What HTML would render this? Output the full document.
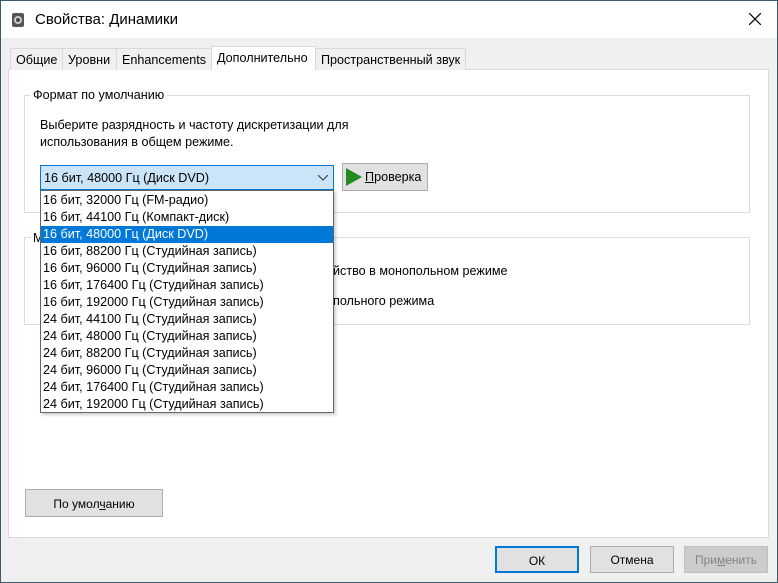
<!DOCTYPE html><html><head><meta charset="utf-8"><style>
*{margin:0;padding:0;box-sizing:border-box}
body{width:778px;height:583px;background:#f0f0f0;font-family:"Liberation Sans",sans-serif;font-size:12.6px;color:#000;position:relative;overflow:hidden}
.a{position:absolute}
.win{left:0;top:0;width:778px;height:583px;border:1px solid #3a5a6e}
.title{left:1px;top:1px;width:776px;height:37px;background:#fff}
.tab{top:48px;height:22px;border:1px solid #d9d9d9;border-bottom:none;background:#f0f0f0;padding:4px 0 0 5px;white-space:nowrap}
.panel{left:8px;top:69px;width:761px;height:469px;background:#fff;border:1px solid #d9d9d9}
.grp{border:1px solid #dcdcdc}
.btn{background:#e1e1e1;border:1px solid #adadad;text-align:center;font-size:12px}
.item{height:17px;line-height:17px;padding-left:2px;white-space:nowrap}
</style></head><body>
<div class="a win"></div>
<div class="a title"></div>
<svg class="a" style="left:11px;top:12px" width="14" height="16"><rect x="1" y="1" width="12" height="14" rx="2" fill="#555"/><circle cx="7" cy="8" r="4" fill="#ccc"/><circle cx="7" cy="8" r="2" fill="#444"/></svg>
<div class="a" style="left:35px;top:11px;font-size:15px">Свойства: Динамики</div>
<svg class="a" style="left:749px;top:13px" width="12" height="12"><path d="M0 0L12 12M12 0L0 12" stroke="#000" stroke-width="1.2"/></svg>
<div class="a panel"></div>
<div class="a tab" style="left:10px;width:53px">Общие</div>
<div class="a tab" style="left:62px;width:55px">Уровни</div>
<div class="a tab" style="left:116px;width:96px">Enhancements</div>
<div class="a tab" style="left:315px;width:151px">Пространственный звук</div>
<div class="a tab" style="left:211px;top:46px;height:24px;width:105px;background:#fff;padding-top:4px">Дополнительно</div>
<div class="a grp" style="left:24px;top:95px;width:726px;height:118px"></div>
<div class="a" style="left:30px;top:88px;background:#fff;padding:0 3px">Формат по умолчанию</div>
<div class="a" style="left:40px;top:117px;line-height:17px">Выберите разрядность и частоту дискретизации для<br>использования в общем режиме.</div>
<div class="a" style="left:40px;top:165px;width:294px;height:25px;background:#cce4f7;border:1px solid #0078d7;padding:5px 0 0 3px">16 бит, 48000 Гц (Диск DVD)</div>
<svg class="a" style="left:318px;top:175px" width="10" height="6"><path d="M0 0L5 5L10 0" stroke="#333" fill="none"/></svg>
<div class="a btn" style="left:342px;top:163px;width:86px;height:28px;text-align:left;padding:6px 0 0 22px;font-size:12.6px"><u>П</u>роверка</div>
<svg class="a" style="left:345px;top:168px" width="18" height="18"><path d="M1 0L17 9L1 18Z" fill="#228b22"/></svg>
<div class="a grp" style="left:24px;top:237px;width:726px;height:88px"></div>
<div class="a" style="left:31px;top:231px;background:#fff;padding:0 2px">М</div>
<div class="a" style="left:333px;top:264px">йство в монопольном режиме</div>
<div class="a" style="left:333px;top:294px">польного режима</div>
<div class="a" style="left:40px;top:190px;width:294px;height:223px;background:#fff;border:1px solid #646464;box-shadow:2px 2px 3px rgba(0,0,0,.2);padding-top:1px">
<div class="item">16 бит, 32000 Гц (FM-радио)</div>
<div class="item">16 бит, 44100 Гц (Компакт-диск)</div>
<div class="item" style="background:#0078d7;color:#fff">16 бит, 48000 Гц (Диск DVD)</div>
<div class="item">16 бит, 88200 Гц (Студийная запись)</div>
<div class="item">16 бит, 96000 Гц (Студийная запись)</div>
<div class="item">16 бит, 176400 Гц (Студийная запись)</div>
<div class="item">16 бит, 192000 Гц (Студийная запись)</div>
<div class="item">24 бит, 44100 Гц (Студийная запись)</div>
<div class="item">24 бит, 48000 Гц (Студийная запись)</div>
<div class="item">24 бит, 88200 Гц (Студийная запись)</div>
<div class="item">24 бит, 96000 Гц (Студийная запись)</div>
<div class="item">24 бит, 176400 Гц (Студийная запись)</div>
<div class="item">24 бит, 192000 Гц (Студийная запись)</div>
</div>
<div class="a btn" style="left:25px;top:489px;width:138px;height:28px;padding-top:7px">По умол<u>ч</u>анию</div>
<div class="a btn" style="left:495px;top:546px;width:84px;height:27px;padding-top:6px;border:2px solid #0078d7">ОК</div>
<div class="a btn" style="left:590px;top:546px;width:84px;height:27px;padding-top:6px">Отмена</div>
<div class="a btn" style="left:684px;top:546px;width:84px;height:27px;padding-top:6px;background:#cccccc;border-color:#bfbfbf;color:#838383">При<u>м</u>енить</div>
</body></html>
